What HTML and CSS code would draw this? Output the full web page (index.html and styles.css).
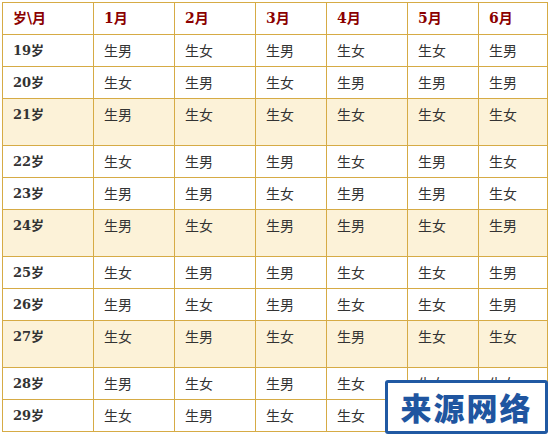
FILE: index.html
```html
<!DOCTYPE html>
<html lang="zh">
<head>
<meta charset="utf-8">
<link rel="stylesheet" href="styles.css">
</head>
<body>
<div class="wrap">
<table class="chart">
<colgroup>
<col class="c0"><col class="c1"><col class="c2"><col class="c3"><col class="c4"><col class="c5"><col class="c6">
</colgroup>
<thead>
<tr><th>岁\月</th><th>1月</th><th>2月</th><th>3月</th><th>4月</th><th>5月</th><th>6月</th></tr>
</thead>
<tbody>
<tr><td class="age">19岁</td><td>生男</td><td>生女</td><td>生男</td><td>生女</td><td>生女</td><td>生男</td></tr>
<tr><td class="age">20岁</td><td>生女</td><td>生男</td><td>生女</td><td>生男</td><td>生男</td><td>生男</td></tr>
<tr class="hl"><td class="age">21岁</td><td>生男</td><td>生女</td><td>生女</td><td>生女</td><td>生女</td><td>生女</td></tr>
<tr><td class="age">22岁</td><td>生女</td><td>生男</td><td>生男</td><td>生女</td><td>生男</td><td>生女</td></tr>
<tr><td class="age">23岁</td><td>生男</td><td>生男</td><td>生女</td><td>生男</td><td>生男</td><td>生女</td></tr>
<tr class="hl"><td class="age">24岁</td><td>生男</td><td>生女</td><td>生男</td><td>生男</td><td>生女</td><td>生男</td></tr>
<tr><td class="age">25岁</td><td>生女</td><td>生男</td><td>生男</td><td>生女</td><td>生女</td><td>生男</td></tr>
<tr><td class="age">26岁</td><td>生男</td><td>生女</td><td>生男</td><td>生女</td><td>生女</td><td>生男</td></tr>
<tr class="hl"><td class="age">27岁</td><td>生女</td><td>生男</td><td>生女</td><td>生男</td><td>生女</td><td>生女</td></tr>
<tr><td class="age">28岁</td><td>生男</td><td>生女</td><td>生男</td><td>生女</td><td>生女</td><td>生女</td></tr>
<tr><td class="age">29岁</td><td>生女</td><td>生男</td><td>生女</td><td>生女</td><td>生男</td><td>生男</td></tr>
</tbody>
</table>
<div class="stamp">来源网络</div>
</div>
</body>
</html>
```
FILE: styles.css
```css
html, body {
  margin: 0;
  padding: 0;
  background: #ffffff;
}
.wrap {
  position: relative;
  width: 552px;
  height: 435px;
  overflow: hidden;
}
.chart {
  margin: 2px 0 0 2px;
  border-collapse: collapse;
  table-layout: fixed;
  width: 545px;
  font-family: "Noto Sans CJK SC", "Liberation Sans", sans-serif;
  font-size: 14px;
  color: #333333;
}
.c0 { width: 91px; }
.c1 { width: 81px; }
.c2 { width: 81px; }
.c3 { width: 71px; }
.c4 { width: 81px; }
.c5 { width: 71px; }
.c6 { width: 69px; }
.chart th,
.chart td {
  border: 1px solid #d6ab45;
  padding: 0 0 0 10px;
  height: 31px;
  line-height: 31px;
  text-align: left;
  vertical-align: top;
  overflow: hidden;
  white-space: nowrap;
}
.chart th {
  color: #8b0000;
  font-weight: bold;
  font-size: 14px;
  font-family: "DejaVu Serif", "Noto Sans CJK SC", serif;
}
.chart td.age {
  font-weight: bold;
  font-size: 13px;
  color: #333333;
  font-family: "DejaVu Serif", "Noto Sans CJK SC", serif;
}
.chart tr.hl td {
  background: #fcf2d8;
  height: 46px;
}
.stamp {
  position: absolute;
  left: 385px;
  top: 380px;
  width: 157px;
  height: 48px;
  border: 3px solid #2059a3;
  border-radius: 3px;
  background: #ffffff;
  color: #1f55a0;
  font-family: "Noto Sans CJK SC", sans-serif;
  font-weight: 900;
  font-size: 31px;
  line-height: 48px;
  text-align: center;
  letter-spacing: 2px;
}
```
